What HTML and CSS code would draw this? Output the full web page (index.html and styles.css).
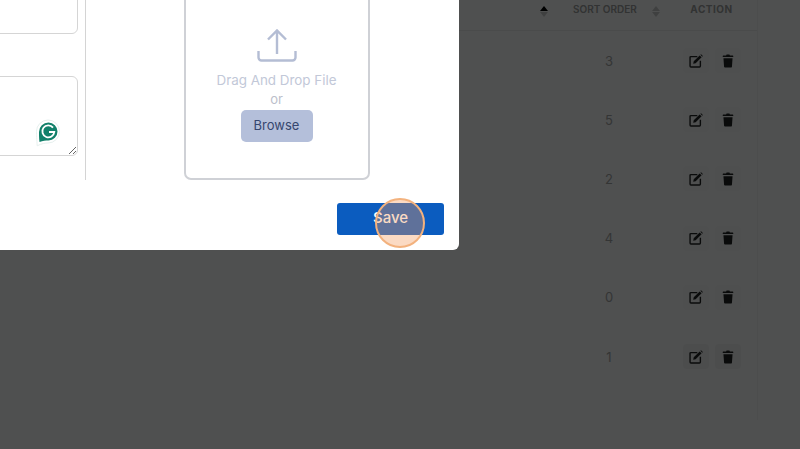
FILE: index.html
```html
<!DOCTYPE html>
<html lang="en">
<head>
    <meta charset="UTF-8">
    <title>Categories</title>
    <link rel="stylesheet" href="styles.css">
</head>
<body>

<svg width="0" height="0" class="defs">
    <symbol id="edit" viewBox="0 0 16 16">
        <path d="M9.5 3H2.200c-.6 0-1 .4-1 1v9.800c0 .6.4 1 1 1H12c.6 0 1-.4 1-1V7.600" fill="none" stroke="currentColor" stroke-width="1.600"/>
        <path d="M5.400 8.400 12.200 1.600l2.200 2.200-6.800 6.800-2.800.6zM13 .8l.8-.6 2 2-.6.8z" fill="currentColor"/>
    </symbol>
    <symbol id="trash" viewBox="0 0 16 16">
        <path d="M2.600 1.800h3.200L6.400.6h3.200l.6 1.200h3.200c.4 0 .6.3.6.6v1H2v-1c0-.3.2-.6.6-.6zM2.800 4.800h10.400l-.7 9.800c0 .5-.5.9-1 .9H4.500c-.5 0-1-.4-1-.9z" fill="currentColor"/>
    </symbol>
</svg>

<div class="table">
    <div class="row head">
        <div class="name-cell"><span class="sort"><i class="up on"></i><i class="down"></i></span></div>
        <div class="order-head">SORT ORDER <span class="sort"><i class="up"></i><i class="down"></i></span></div>
        <div class="action-head">ACTION</div>
    </div>
    <div class="row">
        <div class="name-cell"></div><div class="order">3</div>
        <div class="actions"><span class="act"><svg><use href="#edit"/></svg></span><span class="act"><svg><use href="#trash"/></svg></span></div>
    </div>
    <div class="row">
        <div class="name-cell"></div><div class="order">5</div>
        <div class="actions"><span class="act"><svg><use href="#edit"/></svg></span><span class="act"><svg><use href="#trash"/></svg></span></div>
    </div>
    <div class="row">
        <div class="name-cell"></div><div class="order">2</div>
        <div class="actions"><span class="act"><svg><use href="#edit"/></svg></span><span class="act"><svg><use href="#trash"/></svg></span></div>
    </div>
    <div class="row">
        <div class="name-cell"></div><div class="order">4</div>
        <div class="actions"><span class="act"><svg><use href="#edit"/></svg></span><span class="act"><svg><use href="#trash"/></svg></span></div>
    </div>
    <div class="row">
        <div class="name-cell"></div><div class="order">0</div>
        <div class="actions"><span class="act"><svg><use href="#edit"/></svg></span><span class="act"><svg><use href="#trash"/></svg></span></div>
    </div>
    <div class="row">
        <div class="name-cell"></div><div class="order">1</div>
        <div class="actions"><span class="act hover"><svg><use href="#edit"/></svg></span><span class="act hover"><svg><use href="#trash"/></svg></span></div>
    </div>
</div>

<div class="backdrop"></div>

<div class="modal">
    <div class="modal-body">
        <div class="fields">
            <input type="text" class="field">
            <div class="area-wrap">
                <textarea class="field area"></textarea>
                <span class="grammarly">
                    <svg width="24" height="28" viewBox="0 0 24 28">
                        <path d="M12 1a11.500 11.500 0 1 1 0 23c-3 0-6 .4-10.800 2.800C.8 20 .5 16 .5 12.500A11.500 11.500 0 0 1 12 1z" fill="#fff" stroke="#e6f0ee"/>
                        <path d="M12.500 3.500a9 9 0 1 1 0 18c-3 0-5.500.3-9 1.500-.5-4-.5-7-.5-10a9.500 9.500 0 0 1 9.500-9.500z" fill="#11806a"/>
                        <path d="M17 8.600A6 6 0 1 0 18.300 13h-5.300" fill="none" stroke="#fff" stroke-width="1.800"/>
                    </svg>
                </span>
            </div>
        </div>
        <div class="upload-col">
            <div class="dropzone">
                <svg class="upload-icon" width="42" height="36" viewBox="0 0 42 36">
                    <path d="M21 26V3M12 11.500 21 2.500l9 9M2.500 23v6.500a3 3 0 0 0 3 3h31a3 3 0 0 0 3-3V23" fill="none" stroke="#b4bdd4" stroke-width="2.400"/>
                </svg>
                <div class="drop-text">Drag And Drop File</div>
                <div class="drop-or">or</div>
                <button class="browse">Browse</button>
            </div>
        </div>
    </div>
    <div class="modal-foot">
        <button class="save">Save</button>
    </div>
</div>

<div class="click-mark"></div>

</body>
</html>
```

FILE: styles.css
```css
html, body {
    height: 100%;
}
body {
    margin: 0;
    background: #fff;
    font-family: Inter, "Liberation Sans", sans-serif;
    overflow: hidden;
}
.defs {
    display: block;
    height: 0;
}
/* table under the modal */
.table {
    width: 757px;
    border-right: 1px solid #f4f4f4;
    height: 420px;
}
.row {
    display: grid;
    grid-template-columns: 549px 120px 85px;
    align-items: center;
    height: 59.2px;
}
.row.head {
    height: 31px;
    border-bottom: 1px solid #efefef;
    box-sizing: border-box;
    align-items: start;
    padding-top: 3px;
    font-size: 10px;
    font-weight: 600;
    color: #a0a0a0;
}
.name-cell {
    text-align: right;
}
.order-head {
    padding-left: 24px;
    white-space: nowrap;
}
.action-head {
    text-align: center;
    letter-spacing: 0.5px;
    font-weight: 700;
}
.sort {
    display: inline-flex;
    flex-direction: column;
    gap: 1px;
    vertical-align: middle;
    margin-left: 13px;
    margin-top: 3px;
}
.name-cell .sort {
    margin-right: 1px;
}
.sort i {
    display: block;
    width: 0;
    height: 0;
    border-left: 4px solid transparent;
    border-right: 4px solid transparent;
}
.sort .up {
    border-bottom: 5px solid #ccc;
}
.sort .up.on {
    border-bottom-color: #000;
}
.sort .down {
    border-top: 5px solid #ccc;
}
.order {
    text-align: center;
    font-size: 13px;
    color: #a8a8a8;
}
.actions {
    display: flex;
    justify-content: center;
    gap: 6px;
}
.act {
    display: flex;
    align-items: center;
    justify-content: center;
    width: 26px;
    height: 25px;
    border-radius: 4px;
    background: #fcfcfc;
    color: #222;
}
.act.hover {
    background: #f5f5f5;
}
.act svg {
    width: 14px;
    height: 14px;
}
.backdrop {
    position: fixed;
    inset: 0;
    background: rgba(0, 2, 1, 0.69);
}
/* modal, runs off the top left of the window */
.modal {
    position: absolute;
    left: -300px;
    top: -60px;
    width: 759px;
    box-sizing: border-box;
    background: #fff;
    border-radius: 6px;
    padding-top: 50px;
}
.modal-body {
    display: flex;
    height: 190px;
}
.fields {
    width: 386px;
    flex-shrink: 0;
    box-sizing: border-box;
    border-right: 1.500px solid #d4d4d4;
    padding-top: 4px;
    display: flex;
    flex-direction: column;
    gap: 42px;
}
.field {
    display: block;
    width: 378px;
    box-sizing: border-box;
    border: 1px solid #d5d5d5;
    border-radius: 6px;
    background: #fff;
    margin: 0;
    outline: none;
}
input.field {
    height: 40px;
}
.area-wrap {
    position: relative;
    width: 378px;
}
.area {
    height: 80px;
    resize: both;
}
.grammarly {
    position: absolute;
    left: 336px;
    top: 43px;
    width: 24px;
    height: 28px;
}
.upload-col {
    flex: 1;
    display: flex;
    justify-content: center;
    padding-left: 8px;
}
.dropzone {
    width: 186px;
    box-sizing: border-box;
    border: 2px solid #cfd1d6;
    border-radius: 7px;
    display: flex;
    flex-direction: column;
    align-items: center;
    padding-top: 36px;
}
.upload-icon {
    display: block;
}
.drop-text {
    margin-top: 7px;
    font-size: 13.400px;
    line-height: 18px;
    color: #c2c8d8;
}
.drop-or {
    font-size: 13px;
    line-height: 18px;
    margin-top: 1px;
    color: #bcc0cb;
}
.browse {
    margin-top: 2px;
    width: 72px;
    height: 32px;
    border: none;
    border-radius: 5px;
    background: #b4bfda;
    color: #36466e;
    font-family: inherit;
    font-size: 13px;
    padding-bottom: 4px;
}
.modal-foot {
    display: flex;
    justify-content: flex-end;
    padding: 23px 15px 15px 0;
}
.save {
    width: 107px;
    height: 32px;
    border: none;
    border-radius: 3px;
    background: #0b5cbf;
    color: #fff;
    font-family: inherit;
    font-size: 15px;
    font-weight: 500;
    padding-bottom: 4px;
}
/* orange ring from the screen recorder */
.click-mark {
    position: absolute;
    left: 375px;
    top: 198px;
    width: 50px;
    height: 50px;
    box-sizing: border-box;
    border: 2px solid #f3b27e;
    border-radius: 50%;
    background: rgba(245, 152, 88, 0.36);
}
```
